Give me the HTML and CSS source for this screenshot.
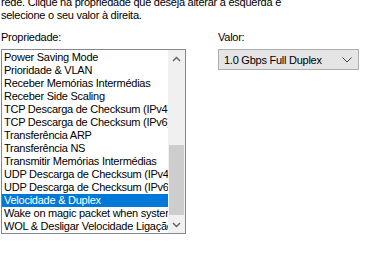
FILE: index.html
```html
<!DOCTYPE html>
<html lang="pt">
<head>
  <meta charset="UTF-8" />
  <title>Avançadas</title>
  <link rel="stylesheet" href="styles.css">
</head>
<body>
  <p class="intro">rede. Clique na propriedade que deseja alterar à esquerda e<br>selecione o seu valor à direita.</p>

  <div class="fields">
    <div class="prop-col">
      <label class="caption">Propriedade:</label>
      <div class="listbox">
        <ul class="items">
          <li>Power Saving Mode</li>
          <li>Prioridade &amp; VLAN</li>
          <li>Receber Memórias Intermédias</li>
          <li>Receber Side Scaling</li>
          <li>TCP Descarga de Checksum (IPv4)</li>
          <li>TCP Descarga de Checksum (IPv6)</li>
          <li>Transferência ARP</li>
          <li>Transferência NS</li>
          <li>Transmitir Memórias Intermédias</li>
          <li>UDP Descarga de Checksum (IPv4)</li>
          <li>UDP Descarga de Checksum (IPv6)</li>
          <li class="selected">Velocidade &amp; Duplex</li>
          <li>Wake on magic packet when system is in S0ix</li>
          <li>WOL &amp; Desligar Velocidade Ligação</li>
        </ul>
        <div class="scrollbar">
          <span class="arrow">
            <svg width="9" height="6" viewBox="0 0 9 6"><path d="M1 5 L4.5 1.5 L8 5" fill="none" stroke="#606060" stroke-width="1.4"/></svg>
          </span>
          <div class="track"><div class="thumb"></div></div>
          <span class="arrow">
            <svg width="9" height="6" viewBox="0 0 9 6"><path d="M1 1 L4.5 4.5 L8 1" fill="none" stroke="#606060" stroke-width="1.4"/></svg>
          </span>
        </div>
      </div>
    </div>

    <div class="value-col">
      <label class="caption">Valor:</label>
      <div class="combo">
        <span>1.0 Gbps Full Duplex</span>
        <svg width="10" height="6" viewBox="0 0 10 6"><path d="M0.5 0.5 L5 5 L9.5 0.5" fill="none" stroke="#444" stroke-width="1"/></svg>
      </div>
    </div>
  </div>
</body>
</html>
```

FILE: styles.css
```css
body {
  margin: 0;
  background: #ffffff;
  font-family: 'Liberation Sans', Arial, sans-serif;
  font-size: 11px;
  letter-spacing: -0.25px;
  color: #000;
  overflow: hidden;
}

.intro {
  margin: -4px 0 0 1px;
  line-height: 13px;
}

.fields {
  display: flex;
  margin-top: 9px;
}

.caption {
  display: block;
  line-height: 13px;
  margin-bottom: 5px;
}

.prop-col {
  margin-left: 1px;
}

.listbox {
  display: flex;
  width: 183px;
  height: 183px;
  border: 1px solid #828790;
  overflow: hidden;
}

.items {
  list-style: none;
  margin: 0;
  padding: 1px 0 0 0;
  width: 166px;
  overflow: hidden;
}

.items li {
  height: 13px;
  line-height: 13px;
  padding-left: 2px;
  white-space: nowrap;
  overflow: hidden;
}

.items li.selected {
  background: #0078d7;
  color: #fff;
}

.scrollbar {
  width: 17px;
  display: flex;
  flex-direction: column;
  background: #f0f0f0;
}

.arrow {
  height: 17px;
  display: flex;
  align-items: center;
  justify-content: center;
}

.track {
  flex: 1;
  display: flex;
  flex-direction: column;
  justify-content: flex-end;
  padding: 0 1px;
}

.thumb {
  height: 70px;
  background: #cdcdcd;
  margin-bottom: 1px;
}

.value-col {
  margin-left: 32px;
}

.combo {
  display: flex;
  align-items: center;
  justify-content: space-between;
  width: 128px;
  height: 19px;
  padding: 0 6px 0 5px;
  background: #e5e5e5;
  border: 1px solid #adadad;
}
```
